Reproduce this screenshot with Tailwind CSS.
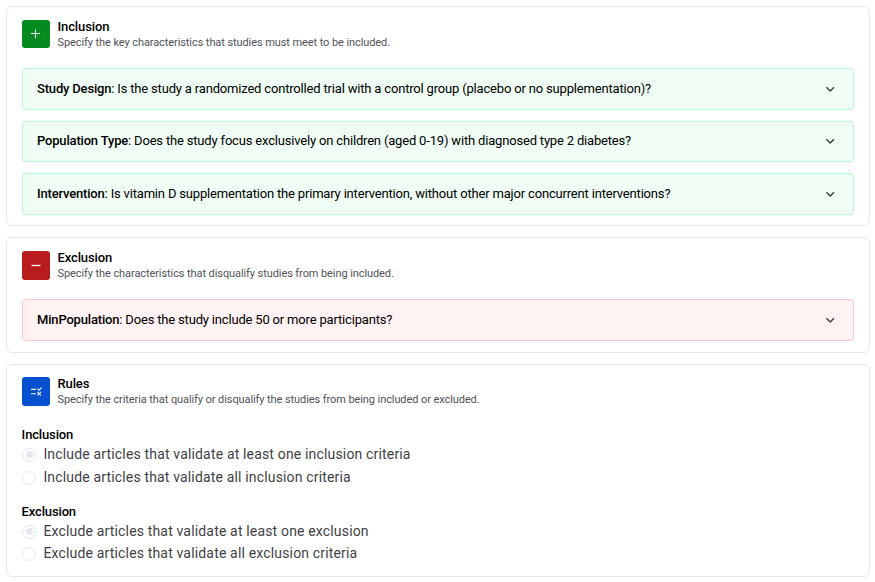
<!DOCTYPE html>
<html lang="en">
<head>
<meta charset="utf-8">
<title>Criteria</title>
<script src="https://cdn.jsdelivr.net/npm/@tailwindcss/browser@4"></script>
</head>
<body class="bg-white font-['Roboto',sans-serif] text-black">
<main class="flex flex-col gap-[11px] pt-[6px] pl-[6px] w-[870px]">

  <section class="h-[220px] rounded-[6px] border border-[#e5e7eb] px-[15px] pt-[13px]">
    <header class="flex h-[48px] gap-[7.5px]">
      <div class="flex size-[28px] shrink-0 items-center justify-center rounded-[3px] bg-[#048b20]">
        <svg class="size-[14px]" viewBox="0 0 14 14" fill="none" stroke="#fff" stroke-width="1.1"><path d="M6.5 2.5v9M2 6.5h9"/></svg>
      </div>
      <div>
        <h2 class="text-[13px] leading-[14px] font-medium tracking-[-0.12px]">Inclusion</h2>
        <p class="text-[11px] leading-[18px] tracking-[-0.086px] text-[#52525b]">Specify the key characteristics that studies must meet to be included.</p>
      </div>
    </header>
    <div class="flex flex-col gap-[11px]">
      <div class="flex h-[42px] items-center justify-between rounded-[3px] border border-[#bbf7d0] bg-[#f0fdf4] pl-[14px] pr-[17px]">
        <p class="text-[13px] leading-[20px] tracking-[-0.178px]"><span class="font-medium">Study Design</span>: Is the study a randomized controlled trial with a control group (placebo or no supplementation)?</p>
        <svg class="size-[12px]" viewBox="0 0 12 12" fill="none" stroke="#3f3f46" stroke-width="1.5"><path d="M2.4 4.3l3.8 3.7L10 4.3"/></svg>
      </div>
      <div class="flex h-[41px] items-center justify-between rounded-[3px] border border-[#bbf7d0] bg-[#f0fdf4] pb-[1px] pl-[14px] pr-[17px]">
        <p class="text-[13px] leading-[20px] tracking-[-0.178px]"><span class="font-medium">Population Type</span>: Does the study focus exclusively on children (aged 0-19) with diagnosed type 2 diabetes?</p>
        <svg class="size-[12px]" viewBox="0 0 12 12" fill="none" stroke="#3f3f46" stroke-width="1.5"><path d="M2.4 4.3l3.8 3.7L10 4.3"/></svg>
      </div>
      <div class="flex h-[42px] items-center justify-between rounded-[3px] border border-[#bbf7d0] bg-[#f0fdf4] pl-[14px] pr-[17px]">
        <p class="text-[13px] leading-[20px] tracking-[-0.178px]"><span class="font-medium">Intervention</span>: Is vitamin D supplementation the primary intervention, without other major concurrent interventions?</p>
        <svg class="size-[12px]" viewBox="0 0 12 12" fill="none" stroke="#3f3f46" stroke-width="1.5"><path d="M2.4 4.3l3.8 3.7L10 4.3"/></svg>
      </div>
    </div>
  </section>

  <section class="h-[116px] rounded-[6px] border border-[#e5e7eb] px-[15px] pt-[13px]">
    <header class="flex h-[48px] gap-[7.5px]">
      <div class="flex h-[29px] w-[28px] shrink-0 items-center justify-center rounded-[3px] bg-[#b91c1c]">
        <svg class="size-[14px]" viewBox="0 0 14 14" fill="none" stroke="#fff" stroke-width="1.3"><path d="M2.5 6.5h9"/></svg>
      </div>
      <div>
        <h2 class="text-[13px] leading-[14px] font-medium tracking-[-0.12px]">Exclusion</h2>
        <p class="text-[11px] leading-[18px] tracking-[-0.086px] text-[#52525b]">Specify the characteristics that disqualify studies from being included.</p>
      </div>
    </header>
    <div class="flex h-[42px] items-center justify-between rounded-[3px] border border-[#fecaca] bg-[#fef2f2] pl-[14px] pr-[17px]">
      <p class="text-[13px] leading-[20px] tracking-[-0.178px]"><span class="font-medium">MinPopulation</span>: Does the study include 50 or more participants?</p>
      <svg class="size-[12px]" viewBox="0 0 12 12" fill="none" stroke="#3f3f46" stroke-width="1.5"><path d="M2.4 4.3l3.8 3.7L10 4.3"/></svg>
    </div>
  </section>

  <section class="h-[213px] rounded-[6px] border border-[#e5e7eb] px-[15px] pt-[12px]">
    <header class="flex h-[50px] gap-[7.5px]">
      <div class="flex h-[29px] w-[28px] shrink-0 items-center justify-center rounded-[3px] bg-[#0450cf]">
        <svg class="size-[13px]" viewBox="0 0 24 24" fill="#fff"><path d="M16.54 11L13 7.46l1.41-1.41 2.12 2.12 4.24-4.24 1.41 1.41L16.54 11zM11 7H2v2h9V7zm10 6.41L19.59 12 17 14.59 14.41 12 13 13.41 15.59 16 13 18.59 14.41 20 17 17.41 19.59 20 21 18.59 18.41 16 21 13.41zM11 15H2v2h9v-2z"/></svg>
      </div>
      <div>
        <h2 class="text-[13px] leading-[14px] font-medium tracking-[-0.12px]">Rules</h2>
        <p class="text-[11px] leading-[18px] tracking-[-0.086px] text-[#52525b]">Specify the criteria that qualify or disqualify the studies from being included or excluded.</p>
      </div>
    </header>
    <div class="flex flex-col gap-[11px]">
      <div>
        <h3 class="-ml-[0.4px] text-[13px] leading-[16px] font-medium tracking-[-0.15px]">Inclusion</h3>
        <div class="flex h-[23px] items-center gap-[7.4px]">
          <span class="flex size-[14px] items-center justify-center rounded-full border border-[#e5e7eb]"><span class="size-[7px] rounded-full bg-[#e5e7eb]"></span></span>
          <span class="text-[14px] tracking-[0.165px] text-[#3f3f46]">Include articles that validate at least one inclusion criteria</span>
        </div>
        <div class="flex h-[23px] items-center gap-[7.4px]">
          <span class="size-[14px] rounded-full border border-[#e5e7eb]"></span>
          <span class="text-[14px] tracking-[0.16px] text-[#3f3f46]">Include articles that validate all inclusion criteria</span>
        </div>
      </div>
      <div class="pt-[4px]">
        <h3 class="-ml-[0.4px] text-[13px] leading-[16px] font-medium tracking-[-0.15px]">Exclusion</h3>
        <div class="flex h-[22px] items-center gap-[7.4px]">
          <span class="mt-[1px] flex size-[14px] items-center justify-center rounded-full border border-[#e5e7eb]"><span class="size-[7px] rounded-full bg-[#e5e7eb]"></span></span>
          <span class="text-[14px] tracking-[0.165px] text-[#3f3f46]">Exclude articles that validate at least one exclusion</span>
        </div>
        <div class="flex h-[22px] items-center gap-[7.4px]">
          <span class="mt-[1px] size-[14px] rounded-full border border-[#e5e7eb]"></span>
          <span class="text-[14px] tracking-[0.165px] text-[#3f3f46]">Exclude articles that validate all exclusion criteria</span>
        </div>
      </div>
    </div>
  </section>

</main>
</body>
</html>
